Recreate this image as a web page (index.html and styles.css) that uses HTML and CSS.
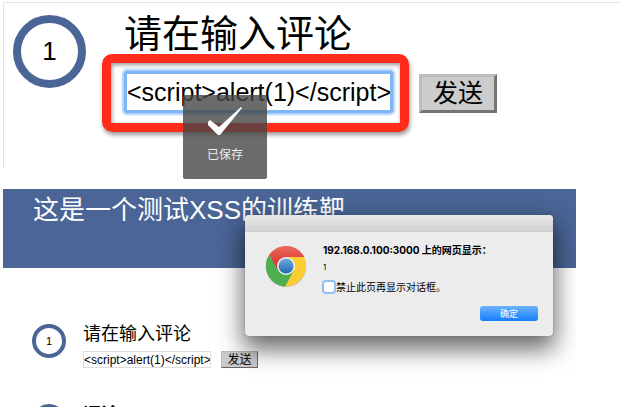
FILE: index.html
```html
<!DOCTYPE html>
<html lang="zh-CN">
<head>
<meta charset="utf-8">
<title>XSS</title>
<link rel="stylesheet" href="styles.css">
</head>
<body>
<section class="closeup">
  <span class="step step-large">1</span>
  <div class="closeup-form">
    <label class="closeup-label" for="comment-large">请在输入评论</label>
    <div class="closeup-row">
      <div class="highlight">
        <input class="field-large" id="comment-large" type="text" value="&lt;script&gt;alert(1)&lt;/script&gt;">
      </div>
      <button class="send send-large" type="button">发送</button>
    </div>
  </div>
  <div class="toast" role="status">
    <svg class="toast-icon" viewBox="0 0 34 28" aria-hidden="true"><path d="M0 15L2 13L11 20L33 0L34 1L12 28H10L0 18Z" fill="#fff"/></svg>
    <span>已保存</span>
  </div>
</section>
<main class="page">
  <header class="banner"><h1 class="title">这是一个测试XSS的训练靶</h1></header>
  <div class="item">
    <span class="step">1</span>
    <div class="item-body">
      <label class="item-label" for="comment">请在输入评论</label>
      <div class="item-row">
        <input class="field" id="comment" type="text" value="&lt;script&gt;alert(1)&lt;/script&gt;">
        <button class="send" type="button">发送</button>
      </div>
    </div>
  </div>
  <div class="item">
    <span class="step"></span>
    <h2 class="item-heading">评论</h2>
  </div>
  <div class="dialog" role="dialog" aria-labelledby="dialog-title">
    <div class="dialog-bar"></div>
    <div class="dialog-body">
      <svg class="chrome" viewBox="0 0 42 42" aria-hidden="true">
        <defs>
          <linearGradient id="red" x1="0" y1="0" x2="0" y2="1"><stop offset="0" stop-color="#ec6a5c"/><stop offset="1" stop-color="#d72424"/></linearGradient>
          <linearGradient id="blue" x1="0" y1="0" x2="0" y2="1"><stop offset="0" stop-color="#70a9dc"/><stop offset="1" stop-color="#1f68b5"/></linearGradient>
        </defs>
        <circle cx="21" cy="21.6" r="20.2" fill="#777" opacity=".5"/>
        <path d="M21 12H39A20.5 20.5 0 0 1 20 41.5L28.800 25.500Z" fill="#fbcd32"/>
        <path d="M13.200 25.500L4.200 9.800A20.500 20.500 0 0 0 20 41.500L28.800 25.500Z" fill="#4faf50"/>
        <path d="M4.200 9.800A20.500 20.500 0 0 1 39.300 12H21L13.200 25.500Z" fill="url(#red)"/>
        <circle cx="21" cy="21" r="9" fill="#eef2f3"/>
        <circle cx="21" cy="21" r="7.500" fill="url(#blue)"/>
      </svg>
      <div class="dialog-content">
        <strong id="dialog-title">192.168.0.100:3000 上的网页显示：</strong>
        <span class="message">1</span>
        <label class="suppress"><input class="check" type="checkbox">禁止此页再显示对话框。</label>
        <button class="confirm" type="button">确定</button>
      </div>
    </div>
  </div>
</main>
</body>
</html>
```
FILE: styles.css
```css
* {
  box-sizing: border-box;
}

body {
  margin: 0;
  padding: 2px 0 0 3px;
  height: 100vh;
  overflow: hidden;
  display: flex;
  flex-direction: column;
  gap: 21px;
  background: #fff;
  color: #000;
  font-family: "Liberation Sans", "Noto Sans CJK SC", sans-serif;
}

input,
button {
  font-family: inherit;
  color: inherit;
}

.closeup {
  position: relative;
  display: flex;
  align-items: flex-start;
  gap: 16px;
  height: 166px;
  flex: none;
  padding: 12px 0 0 9px;
  border-top: 1px solid #e4e4e4;
  border-left: 1px solid #e4e4e4;
  margin-right: 19px;
}

.step {
  display: flex;
  align-items: center;
  justify-content: center;
  flex: none;
  width: 34px;
  height: 34px;
  border: 4px solid #4a6596;
  border-radius: 50%;
  font-size: 11px;
}

.step-large {
  width: 73px;
  height: 73px;
  border-width: 8px;
  font-size: 26px;
}

.closeup-label {
  display: block;
  padding-left: 22px;
  font-size: 38px;
  line-height: 39px;
}

.closeup-row {
  display: flex;
  align-items: center;
  gap: 10px;
}

.highlight {
  border: 9px solid #ff2c1c;
  border-radius: 10px;
  padding: 8px 7px 10px 13px;
  box-shadow: 1px 3px 4px #0006, inset 1px 2px 4px #0006;
}

.field-large {
  display: block;
  width: 269px;
  height: 42px;
  padding: 0;
  border: 3px solid #7db6f2;
  border-radius: 3px;
  outline: 0;
  box-shadow: 0 0 2px 2px #a9d0f8;
  font-size: 25px;
  background: #fff;
}

.send {
  width: 37px;
  height: 17px;
  padding: 0;
  border: 1px solid;
  border-color: #bbb #666 #666 #bbb;
  background: #ccc;
  font-size: 12px;
  line-height: 14px;
}

.send-large {
  width: 78px;
  height: 39px;
  border-width: 3px;
  border-color: #bdbdbd #757575 #757575 #bdbdbd;
  font-size: 25px;
  line-height: 32px;
}

.toast {
  position: absolute;
  left: 179px;
  top: 92px;
  width: 84px;
  height: 84px;
  padding-top: 12px;
  display: flex;
  flex-direction: column;
  align-items: center;
  gap: 11px;
  border-radius: 2px;
  background: rgba(70, 70, 70, .8);
  color: #eee;
  font-size: 12px;
  line-height: 18px;
  z-index: 2;
}

.toast-icon {
  width: 34px;
  height: 28px;
}

.page {
  position: relative;
  flex: 1;
  min-height: 0;
  overflow: hidden;
  margin-right: 64px;
}

.banner {
  height: 79px;
  padding: 0 30px;
  background: #4a6596;
  color: #fff;
}

.title {
  margin: 0;
  font-size: 26px;
  line-height: 42px;
  font-weight: 400;
}

.item {
  display: flex;
  gap: 17px;
  height: 80px;
  padding-left: 29px;
}

.banner + .item {
  margin-top: 56px;
}

.item-body {
  display: flex;
  flex-direction: column;
  gap: 7px;
}

.item-label {
  font-size: 18px;
  line-height: 20px;
}

.item-heading {
  margin: 0;
  font-size: 18px;
  line-height: 22px;
}

.item-row {
  display: flex;
  gap: 10px;
}

.field {
  width: 128px;
  height: 17px;
  padding: 0;
  border: 1px solid #ddd;
  font-size: 12px;
  background: #fff;
}

.dialog {
  position: absolute;
  left: 242px;
  top: 26px;
  width: 308px;
  height: 121px;
  border-radius: 4px;
  background: #ececec;
  box-shadow: 0 11px 24px 2px #0009, 0 0 1px #0008;
}

.dialog-bar {
  height: 17px;
  border-radius: 4px 4px 0 0;
  border-bottom: 1px solid #ccc;
  background: linear-gradient(#e7e7e7, #d2d1d3);
}

.dialog-body {
  display: flex;
  gap: 16px;
  padding: 13px 15px 0 20px;
}

.chrome {
  width: 42px;
  height: 42px;
  flex: none;
}

.dialog-content {
  flex: 1;
  display: flex;
  flex-direction: column;
  font-family: Inter, "Noto Sans CJK SC", sans-serif;
  font-size: 10px;
  line-height: 10px;
}

.message {
  margin-top: 7px;
  font-size: 8px;
  line-height: 10px;
}

.suppress {
  display: flex;
  align-items: center;
  gap: 2px;
  margin-top: 9px;
  line-height: 12px;
}

.check {
  appearance: none;
  width: 10px;
  height: 10px;
  margin: 0 0 0 1px;
  border-radius: 2px;
  background: #fff;
  box-shadow: 0 0 0 2px #93bff0;
}

.confirm {
  align-self: flex-end;
  width: 58px;
  height: 15px;
  margin-top: 13px;
  padding: 0;
  border: 0;
  border-radius: 3px;
  background: linear-gradient(#6cb3fa, #147efb);
  color: #fff;
  font-size: 9px;
  line-height: 15px;
}
```
